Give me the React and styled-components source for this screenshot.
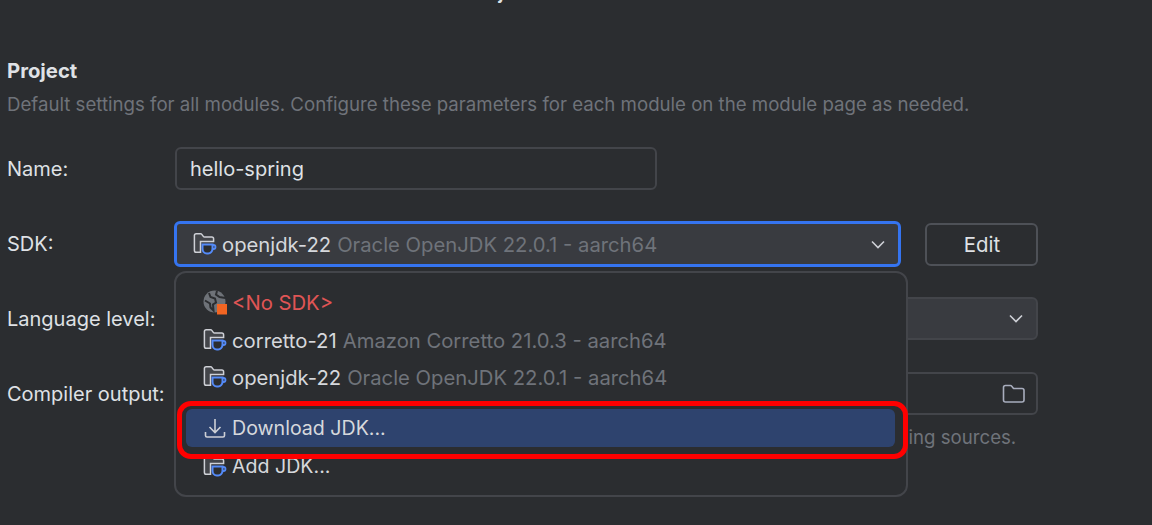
import styled, { createGlobalStyle } from "styled-components";

const GlobalStyle = createGlobalStyle`
  html, body {
    margin: 0;
    height: 100%;
    background: #2b2d30;
    overflow: hidden;
  }
  body {
    font-family: "Inter", "Liberation Sans", sans-serif;
    font-size: 20px;
    color: #dfe1e5;
  }
`;

const Page = styled.div`
  position: relative;
  width: 1152px;
  height: 525px;
  overflow: hidden;
  display: flex;
  flex-direction: column;
  padding-left: 7px;
  box-sizing: border-box;
`;

const WindowTitle = styled.div`
  height: 74px;
  margin-top: -15px;
  padding-right: 68px;
  text-align: center;
  font-weight: 600;
  font-size: 19px;
  line-height: 16px;
`;

const SectionTitle = styled.h2`
  margin: 0;
  height: 24px;
  line-height: 24px;
  font-size: 20.3px;
  font-weight: 700;
`;

const Description = styled.p`
  margin: 9px 0 0;
  height: 24px;
  line-height: 24px;
  color: #6f737a;
  font-size: 18.65px;
  white-space: nowrap;
`;

const Row = styled.div`
  display: flex;
  align-items: center;
  margin-top: ${(p) => p.$top}px;
`;

const Label = styled.span`
  width: 168px;
  flex: none;
`;

const Field = styled.div`
  box-sizing: border-box;
  width: ${(p) => p.$width}px;
  height: 43px;
  display: flex;
  align-items: center;
  justify-content: space-between;
  padding: 0 ${(p) => p.$right || 13}px 0 13px;
  border: 2px solid #43454a;
  border-radius: 6px;
  background: ${(p) => (p.$filled ? "#393b40" : "transparent")};
`;

const FocusedField = styled(Field)`
  height: 46px;
  margin-left: -1px;
  padding: 0 13px 0 16px;
  border: 3px solid #3574f0;
  background: #393b40;
  font-size: 20.25px;
`;

const EditButton = styled.button`
  box-sizing: border-box;
  width: 113px;
  height: 43px;
  margin-left: 24px;
  padding: 0 0 0 1px;
  border: 2px solid #4e5157;
  border-radius: 6px;
  background: transparent;
  color: #dfe1e5;
  font: inherit;
  font-size: 20.4px;
`;

const SdkName = styled.span`
  display: inline-flex;
  align-items: center;
  gap: 5px;
  color: ${(p) => (p.$error ? "#e05555" : "#d6d8dc")};
  white-space: nowrap;
`;

const SdkVendor = styled.span`
  color: #6f737a;
  margin-left: 1px;
`;

const Hint = styled.p`
  margin: 10px 0 0 168px;
  height: 24px;
  line-height: 24px;
  color: #6f737a;
  font-size: 18.65px;
  white-space: nowrap;
`;

const Popup = styled.div`
  position: absolute;
  left: 174px;
  top: 271px;
  box-sizing: border-box;
  width: 734px;
  height: 226px;
  padding: 10px 11px 11px 10px;
  display: flex;
  flex-direction: column;
  border: 2px solid #43454a;
  border-radius: 12px;
  background: #2b2d30;
`;

const Item = styled.div`
  height: ${(p) => p.$height || 38}px;
  display: flex;
  align-items: center;
  flex: none;
  padding-left: 17px;
  margin-bottom: ${(p) => p.$gap || 0}px;
  border-radius: 6px;
  font-size: ${(p) => p.$size || 20.25}px;
  background: ${(p) => (p.$active ? "#2e436e" : "transparent")};
`;

const Annotation = styled.div`
  position: absolute;
  left: 177px;
  top: 401px;
  box-sizing: border-box;
  width: 731px;
  height: 58px;
  border: 5px solid #ff0000;
  border-radius: 14px;
  pointer-events: none;
`;

const JdkIcon = () => (
  <svg width="24" height="24" viewBox="0 0 24 24" fill="none">
    <path
      d="M7.500 20.200H3.200c-1 0-1.800-.8-1.800-1.800V3.600c0-1 .8-1.800 1.800-1.800h4.400c.5 0 .9.200 1.200.6l1.500 2c.3.400.7.600 1.200.6h7.300c1 0 1.800.8 1.800 1.800v2.600H7.500z"
      fill="#43454a"
      stroke="#ced0d6"
      strokeWidth="1.500"
    />
    <path
      d="M9.500 12.500h10v4.200c0 2.700-2.100 4.800-4.300 4.800h-1.400c-2.400 0-4.300-2.100-4.300-4.800z"
      fill="#2b2d30"
      stroke="#548af7"
      strokeWidth="2"
    />
    <path
      d="M19.500 13h1c1.100 0 2 .9 2 2s-.9 2-2 2h-1.200"
      stroke="#548af7"
      strokeWidth="1.800"
    />
  </svg>
);

const NoSdkIcon = () => (
  <svg width="24" height="25" viewBox="0 0 24 25" fill="none">
    <circle cx="11.500" cy="11.500" r="11" fill="#6e7278" />
    <path
      d="M6 3l1.500 4 4.500 1.500 1 4-3 2 .5 6-3-3-.5-4-5-3M14 1l-1 3.500 3.500 2.500 6 1"
      stroke="#2b2d30"
      strokeWidth="2"
    />
    <rect x="14" y="14" width="10" height="10.500" fill="#f26522" />
  </svg>
);

const DownloadIcon = () => (
  <svg width="24" height="24" viewBox="0 0 24 24" fill="none" stroke="#ced0d6" strokeWidth="1.600">
    <path d="M12 3v13M6.500 11l5.500 5.500 5.500-5.500" />
    <path d="M2.500 16v3.500c0 .8.7 1.500 1.500 1.500h16c.8 0 1.500-.7 1.500-1.500V16" />
  </svg>
);

const Chevron = () => (
  <svg width="14" height="9" viewBox="0 0 14 9" fill="none" stroke="#ced0d6" strokeWidth="1.600">
    <path d="M1 1.500l6 6 6-6" />
  </svg>
);

const FolderIcon = () => (
  <svg width="24" height="20" viewBox="0 0 24 20" fill="none" stroke="#a8adbd" strokeWidth="1.600">
    <path d="M1.500 3.500c0-1.100.9-2 2-2h4.800c.5 0 1 .2 1.300.6l1.500 1.800c.3.400.8.600 1.300.6h7.600c1.100 0 2 .9 2 2v9.500c0 1.100-.9 2-2 2H3.500c-1.100 0-2-.9-2-2z" />
  </svg>
);

const App = () => (
  <Page>
    <GlobalStyle />
    <WindowTitle>Project Structure</WindowTitle>
    <SectionTitle>Project</SectionTitle>
    <Description>
      Default settings for all modules. Configure these parameters for each
      module on the module page as needed.
    </Description>
    <Row $top={31}>
      <Label>Name:</Label>
      <Field $width={482}>hello-spring</Field>
    </Row>
    <Row $top={31}>
      <Label>SDK:</Label>
      <FocusedField $width={727}>
        <SdkName>
          <JdkIcon />
          openjdk-22
          <SdkVendor>Oracle OpenJDK 22.0.1 - aarch64</SdkVendor>
        </SdkName>
        <Chevron />
      </FocusedField>
      <EditButton>Edit</EditButton>
    </Row>
    <Row $top={30}>
      <Label>Language level:</Label>
      <Field $width={863} $filled>
        <span />
        <Chevron />
      </Field>
    </Row>
    <Row $top={32}>
      <Label>Compiler output:</Label>
      <Field $width={863} $right={10}>
        <span />
        <FolderIcon />
      </Field>
    </Row>
    <Hint>
      Used for module subdirectories, Production and Test directories for the
      corresponding sources.
    </Hint>
    <Popup>
      <Item>
        <SdkName $error>
          <NoSdkIcon />
          {"<No SDK>"}
        </SdkName>
      </Item>
      <Item>
        <SdkName>
          <JdkIcon />
          corretto-21
          <SdkVendor>Amazon Corretto 21.0.3 - aarch64</SdkVendor>
        </SdkName>
      </Item>
      <Item $height={36} $gap={14}>
        <SdkName>
          <JdkIcon />
          openjdk-22
          <SdkVendor>Oracle OpenJDK 22.0.1 - aarch64</SdkVendor>
        </SdkName>
      </Item>
      <Item $active $size={19.6}>
        <SdkName>
          <DownloadIcon />
          Download JDK...
        </SdkName>
      </Item>
      <Item $size={19.6}>
        <SdkName>
          <JdkIcon />
          Add JDK...
        </SdkName>
      </Item>
    </Popup>
    <Annotation />
  </Page>
);

export default App;
